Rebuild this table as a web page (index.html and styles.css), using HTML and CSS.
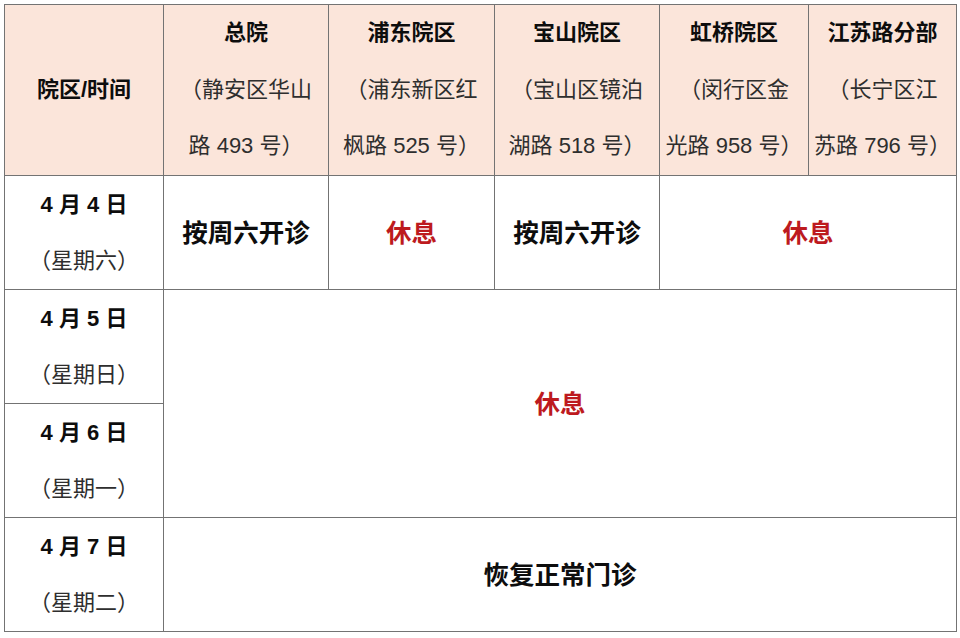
FILE: index.html
```html
<!DOCTYPE html>
<html lang="zh-CN">
<head>
<meta charset="utf-8">
<title>清明节门诊安排</title>
<link rel="stylesheet" href="styles.css">
</head>
<body>
<table class="schedule">
  <colgroup>
    <col class="c0"><col class="c1"><col class="c2"><col class="c3"><col class="c4"><col class="c5">
  </colgroup>
  <thead>
    <tr class="head-row">
      <th><div class="line title">院区/时间</div></th>
      <th><div class="line title">总院</div><div class="line addr">（静安区华山</div><div class="line addr">路 493 号）</div></th>
      <th><div class="line title">浦东院区</div><div class="line addr">（浦东新区红</div><div class="line addr">枫路 525 号）</div></th>
      <th><div class="line title">宝山院区</div><div class="line addr">（宝山区镜泊</div><div class="line addr">湖路 518 号）</div></th>
      <th><div class="line title">虹桥院区</div><div class="line addr">（闵行区金</div><div class="line addr">光路 958 号）</div></th>
      <th><div class="line title">江苏路分部</div><div class="line addr">（长宁区江</div><div class="line addr">苏路 796 号）</div></th>
    </tr>
  </thead>
  <tbody>
    <tr class="r1">
      <td class="date"><div class="line day">4 月 4 日</div><div class="line week">（星期六）</div></td>
      <td class="status">按周六开诊</td>
      <td class="status rest">休息</td>
      <td class="status">按周六开诊</td>
      <td class="status rest" colspan="2">休息</td>
    </tr>
    <tr class="r2">
      <td class="date"><div class="line day">4 月 5 日</div><div class="line week">（星期日）</div></td>
      <td class="status rest" colspan="5" rowspan="2">休息</td>
    </tr>
    <tr class="r3">
      <td class="date"><div class="line day">4 月 6 日</div><div class="line week">（星期一）</div></td>
    </tr>
    <tr class="r4">
      <td class="date"><div class="line day">4 月 7 日</div><div class="line week">（星期二）</div></td>
      <td class="status" colspan="5">恢复正常门诊</td>
    </tr>
  </tbody>
</table>
</body>
</html>
```
FILE: styles.css
```css
html, body {
  margin: 0;
  padding: 0;
  background: #ffffff;
}
body {
  padding: 4px 0 0 4px;
  font-family: "Liberation Sans", "Noto Sans CJK SC", sans-serif;
  color: #111111;
}
.schedule {
  border-collapse: collapse;
  table-layout: fixed;
  width: 952px;
}
.c0 { width: 159px; }
.c1 { width: 165px; }
.c2 { width: 166px; }
.c3 { width: 165px; }
.c4 { width: 149px; }
.c5 { width: 148px; }
.schedule th,
.schedule td {
  border: 1px solid #737373;
  padding: 0;
  text-align: center;
  vertical-align: middle;
}
.line {
  white-space: nowrap;
}
.head-row th {
  background: #fbe5da;
  height: 170px;
  font-size: 22px;
  font-weight: normal;
}
.head-row .line {
  height: 56.5px;
  line-height: 56.5px;
}
.title {
  font-weight: bold;
  color: #0d0d0d;
}
.addr {
  color: #2e2e2e;
}
.r1 td.date { height: 113px; }
.r2 td.date, .r3 td.date { height: 113px; }
.r4 td.date { height: 113px; }
.date {
  font-size: 22px;
}
.date .line {
  height: 56px;
  line-height: 56px;
}
.day {
  font-weight: bold;
  color: #0d0d0d;
}
.week {
  color: #2e2e2e;
}
.schedule td.status {
  font-size: 25.5px;
  font-weight: bold;
  color: #0d0d0d;
  padding-bottom: 5px;
}
.schedule td.status.rest {
  color: #bd1a1e;
}
```
